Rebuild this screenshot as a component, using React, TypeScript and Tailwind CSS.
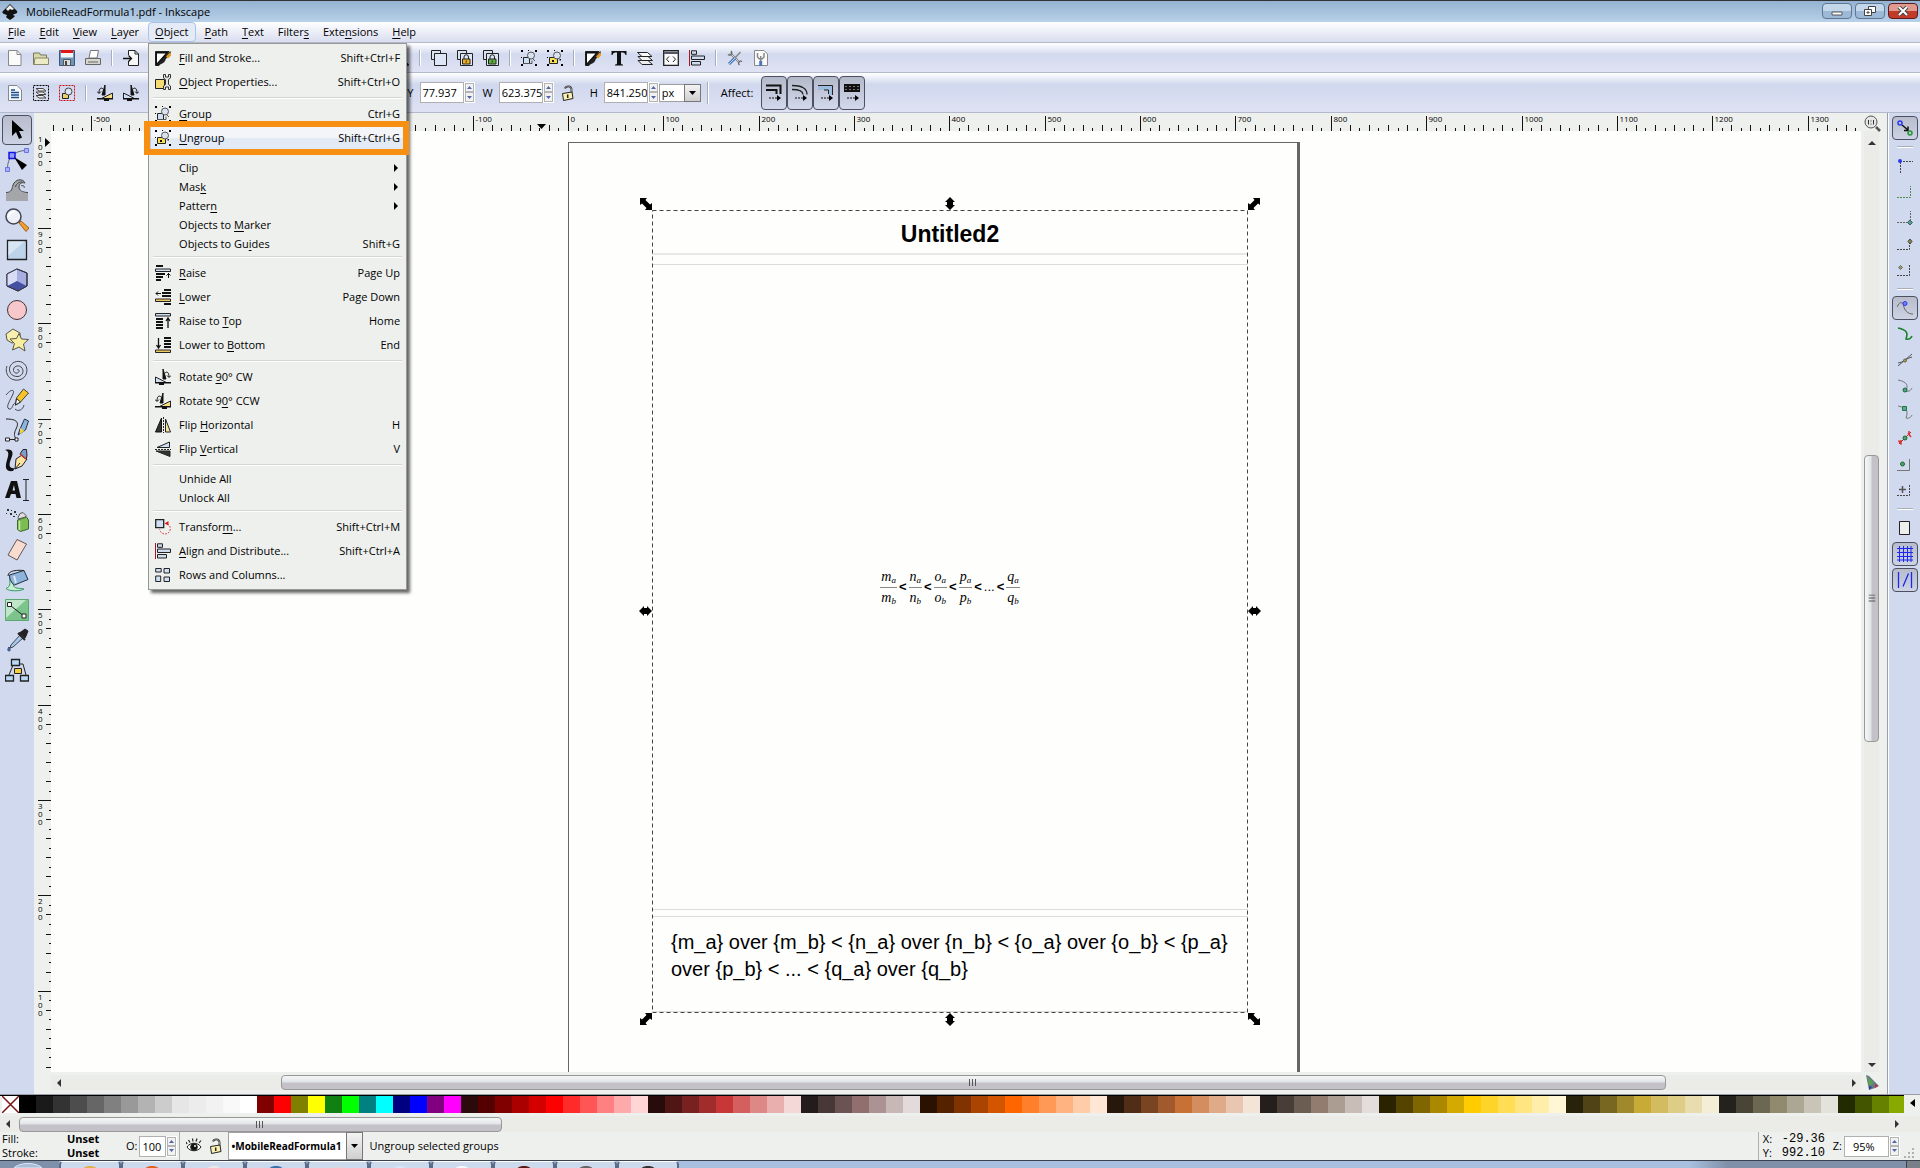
import type { ReactNode } from "react";
import clsx from "clsx";

interface IconProps {
  children: ReactNode;
  size?: number;
}

/* ---------- Icon helpers ---------- */

const Small = ({ children, size = 16 }: IconProps) => (
  <svg width={size} height={size} viewBox="0 0 16 16" fill="none" stroke="#222" aria-hidden="true">
    {children}
  </svg>
);

const Large = ({ children, size = 24 }: IconProps) => (
  <svg width={size} height={size} viewBox="0 0 24 24" fill="none" stroke="#222" aria-hidden="true">
    {children}
  </svg>
);

const dots = (
  <path d="M0 0h2v2H0zM14 0h2v2h-2zM0 14h2v2H0zM14 14h2v2h-2zM7 0h1v1H7zM0 7h1v1H0z" fill="#000" stroke="none" />
);

const lockBody = (fill: string) => (
  <>
    <path d="M7 9V7a2.200 2.200 0 0 1 4.500 0v2" stroke="#222" />
    <path d="M5.500 9h7.500v5H5.500z" fill={fill} />
    <path d="M9.200 10.500v2" />
  </>
);

const pages = (
  <>
    <path d="M.5.5h9v9h-9z" fill="#dbe3ef" />
    <path d="M3.500 3.500h12v12h-12z" fill="#dce6f4" />
  </>
);

const icons = {
  fill: (
    <Small>
      <path d="M.5 1.500H14L4 15.500H.5z" fill="#111" />
      <path d="M2 3.500h8.500L2 13z" fill="#fff" stroke="none" />
      <path d="M15.500 1L9 7.500 2 15c5-.5 8.500-3 8.500-5.500L16 3z" fill="#222" stroke="none" />
      <path d="M15.500 2l-4.500 4.500 2 2 3-3z" fill="#e39a20" stroke="none" />
    </Small>
  ),
  properties: (
    <Small>
      <path d="M.5 5.500h9v9h-9z" fill="#f5dc70" />
      <path d="M8.500.5v3.500l2 1.500v5l-2 1.500v3.500h2v-2.500h3v2.500h2V12l-2-1.500v-5l2-1.500V.5h-2V3h-3V.5z" fill="#e4e4e4" stroke="#333" />
    </Small>
  ),
  group: (
    <Small>
      {dots}
      <path d="M2.500 7.500h6v6h-6z" fill="#cfe0f5" />
      <circle cx="10" cy="5.500" r="3.500" fill="#d8e3f2" stroke="#555" />
      <path d="M12 9l2 2M3 13.500h8v-3" stroke="#555" />
    </Small>
  ),
  ungroup: (
    <Small>
      {dots}
      <path d="M2.500 7.500h8v6h-8z" fill="#f9e050" />
      <circle cx="10" cy="5.500" r="3.500" fill="#d8e3f2" stroke="#555" />
      <path d="M5 10h2v2H5zM12.500 9h1.500v1.500h-1.500z" fill="#111" stroke="none" />
    </Small>
  ),
  raise: (
    <Small>
      <path d="M1 1h7M1 9h9M1 12h7M1 15h5" strokeWidth="2" stroke="#111" />
      <path d="M.5 4h15v2.500H.5z" fill="#cfe0f5" />
      <path d="M13.500 8v5M11.500 10.500l2-2 2 2" stroke="#111" />
    </Small>
  ),
  lower: (
    <Small>
      <path d="M9 1h7M7 4h9M7 7h9M9 15h7" strokeWidth="2" stroke="#111" />
      <path d="M.5 10h15v2.500H.5z" fill="#f0c860" />
      <path d="M1 4.500h5M3 2.500l-2 2 2 2" stroke="#111" />
    </Small>
  ),
  raiseTop: (
    <Small>
      <path d="M.5.5h15V3H.5z" fill="#cfe0f5" />
      <path d="M1 6h7M1 9h7M1 12h7M1 15h7" strokeWidth="2" stroke="#111" />
      <path d="M13 15V5M11 8l2-3 2 3" stroke="#111" strokeWidth="1.300" />
    </Small>
  ),
  lowerBottom: (
    <Small>
      <path d="M.5 13h15v2.500H.5z" fill="#f0c860" />
      <path d="M9 1h7M9 4h7M9 7h7M9 10h7" strokeWidth="2" stroke="#111" />
      <path d="M3.500 1v10M1.500 8l2 3 2-3" stroke="#111" strokeWidth="1.300" />
    </Small>
  ),
  rotateCw: (
    <Small>
      <path d="M8 0v10h3z" fill="#111" stroke="#111" />
      <path d="M.5 13.500V8l11 5.500z" fill="#cfe0f5" />
      <path d="M0 13h16v1.500H0zM4 14h5v2H4z" fill="#111" stroke="none" />
      <path d="M10 4c2-2 4-.5 4 4M12 6.500l2 2 2-2" stroke="#111" />
    </Small>
  ),
  rotateCcw: (
    <Small>
      <path d="M8 0v10H5z" fill="#111" stroke="#111" />
      <path d="M15.500 13.500V8l-11 5.500z" fill="#f7dc80" />
      <path d="M0 13h16v1.500H0zM7 14h5v2H7z" fill="#111" stroke="none" />
      <path d="M6 4C4 2 2 3.500 2 8M0 6.500l2 2 2-2" stroke="#111" />
    </Small>
  ),
  flipH: (
    <Small>
      <path d="M6.500 1v14h-6z" fill="#333" stroke="#111" />
      <path d="M10.500 2v13h5z" fill="#f7e6a0" />
      <path d="M8.500 0v16" strokeDasharray="2 1" />
    </Small>
  ),
  flipV: (
    <Small>
      <path d="M14.500 1v5.500H2z" fill="#cfe0f5" />
      <path d="M15 10v5.500L1 10z" fill="#333" />
      <path d="M0 8.500h16" strokeDasharray="2 1" />
    </Small>
  ),
  transform: (
    <Small>
      <path d="M.7.7h8v8h-8z" fill="#cfe0f5" strokeWidth="1.300" />
      <path d="M12.500 5A5.300 5.300 0 1 1 4.700 10" stroke="#e01818" strokeDasharray="1.500 1.500" />
      <path d="M13.500 2l-4 2.500 4 2z" fill="#e01818" stroke="none" />
    </Small>
  ),
  align: (
    <Small>
      <path d="M.5 0v16" stroke="#b01020" />
      <path d="M2.500.8h5v3.500h-5zM2.500 6h13v3.500h-13zM2.500 11.500h9V15h-9z" fill="#cfdcee" />
    </Small>
  ),
  rows: (
    <Small>
      <path d="M.7 1.500h5.500v3.500H.7zM9 1.500h5.500v4.500H9zM.7 9h5v5.500h-5zM9 10h5.500v4.500H9z" fill="#cfe0f5" />
    </Small>
  ),
  file: (
    <Small>
      <path d="M1.500.5h8.500l4 4v11H1.500z" fill="#fafafa" stroke="#888" />
      <path d="M10 .5v4h4" stroke="#888" />
    </Small>
  ),
  open: (
    <Small>
      <path d="M.5 14.500V3h6l1 2h6v9.500z" fill="#d8d8a8" stroke="#77775c" />
      <path d="M2 8h13.500v6.500H1z" fill="#ecebc6" stroke="#8a8a6a" />
    </Small>
  ),
  save: (
    <Small>
      <path d="M.5.5h15v15H.5z" fill="#6f95bd" stroke="#3c5878" />
      <path d="M2 0h12v3H2z" fill="#e01818" stroke="none" />
      <path d="M2 3h12v4.500H2z" fill="#f5f5f5" stroke="none" />
      <path d="M4.500 9.500h7v6h-7z" fill="#ddd" stroke="#555" />
      <path d="M6 11h2v4H6z" fill="#444" stroke="none" />
    </Small>
  ),
  print: (
    <Small>
      <path d="M4 8L5.500.5h8L12 8z" fill="#fff" stroke="#777" />
      <path d="M.5 8.500h15v6H.5z" fill="#d6d6d0" stroke="#666" />
      <path d="M3 12h10" stroke="#666" />
    </Small>
  ),
  importFile: (
    <Small>
      <path d="M5.500 5V.5H12l3.500 3.500v11.500h-10V11" fill="#f7f7f7" />
      <path d="M12 .5V4h3.500" />
      <path d="M0 8.500h8M5.500 5.500l3 3-3 3" stroke="#111" strokeWidth="1.300" />
    </Small>
  ),
  undo: (
    <Small>
      <path d="M3 6h6a4 4 0 0 1 0 8H6M6 2.500L2.500 6 6 9.500" strokeWidth="2" stroke="#b09030" />
    </Small>
  ),
  copy: (
    <Small>
      <path d="M2.500.5h7v11h-7zM6.500 4.500h7v11h-7z" fill="#fff" />
    </Small>
  ),
  zoomPage: (
    <Small>
      <circle cx="7" cy="7" r="5.500" fill="#e3ebf5" />
      <path d="M11 11l4.500 4.500" strokeWidth="2" />
    </Small>
  ),
  duplicate: <Small>{pages}</Small>,
  clone: (
    <Small>
      {pages}
      {lockBody("#f0b020")}
    </Small>
  ),
  unlink: (
    <Small>
      {pages}
      {lockBody("#60b040")}
    </Small>
  ),
  textT: (
    <Small>
      <path d="M.5 1h15v4h-1c-.5-2-1.500-2.500-4.500-2.500v10.500c0 1 .5 1.500 2 1.500V15.500H4V14.500c1.500 0 2-.5 2-1.500V2.500C3 2.500 2 3 1.500 5h-1z" fill="#111" stroke="none" />
    </Small>
  ),
  layers: (
    <Small>
      <path d="M1 10.500h10l4.500 4H5z" fill="#eee" />
      <path d="M1 6.500h10l4.500 4H5z" fill="#f3f3f3" />
      <path d="M.5 2.500h10l4.500 4H5z" fill="#fafafa" />
    </Small>
  ),
  xml: (
    <Small>
      <path d="M.7.7h14.600v14.600H.7z" fill="#fafafa" strokeWidth="1.300" />
      <path d="M1 1.500h14V4H1z" fill="#556" stroke="none" />
      <path d="M6 6.500L3.500 9.200 6 12M10 6.500l2.500 2.700L10 12" />
    </Small>
  ),
  prefs: (
    <Small>
      <path d="M3 3l9 9" stroke="#777" strokeWidth="2" />
      <path d="M3 3l9 9" stroke="#ddd" />
      <path d="M13.500 2L8 8" stroke="#888" strokeWidth="1.500" />
      <path d="M8 8l-6 6" stroke="#4a78b8" strokeWidth="3" />
      <path d="M8 8l-6 6" stroke="#bcd4f0" />
      <path d="M15 11.500a2 2 0 1 0-2.500 3.500M1 4.500A2 2 0 1 0 4 1" stroke="#666" strokeWidth="1.300" />
    </Small>
  ),
  docPrefs: (
    <Small>
      <path d="M1.500.5H11l3.500 3.500v11.500h-13z" fill="#fafafa" stroke="#888" />
      <path d="M4.500 3v4l2 2h2.500l2-2V3" stroke="#888" strokeWidth="1.500" />
      <path d="M7.700 6v5" stroke="#888" strokeWidth="1.500" />
      <path d="M7.700 11v5" stroke="#4a78b8" strokeWidth="3" />
    </Small>
  ),
  docText: (
    <Small>
      <path d="M1.500.5H10L14.500 5v10.500h-13z" fill="#f7fbff" stroke="#888" />
      <path d="M4 5h4M4 7.500h8M4 10h8M4 12.500h8" stroke="#1c4f8c" strokeWidth="1.300" />
    </Small>
  ),
  selectLayers: (
    <Small>
      <path d="M.5.5h15v15H.5z" stroke="#000" strokeDasharray="2 1" />
      <path d="M3 10.500h7l3 2.500H6zM3 7h7l3 2.500H6zM3 3.500h7L13 6H6z" fill="#eee" stroke="#444" />
    </Small>
  ),
  selectRed: (
    <Small>
      <path d="M.5.5h15v15H.5z" stroke="#d01010" strokeDasharray="2 1" />
      <path d="M3.500 8.500h6v5h-6z" fill="#f0d060" />
      <circle cx="9.500" cy="6.500" r="3.500" fill="#dde6f2" stroke="#444" />
    </Small>
  ),
  unlock: (
    <Small>
      <path d="M5 3.500C6 .5 11 .5 11.500 4v3.500" stroke="#222" strokeWidth="1.800" />
      <path d="M5 3.500C6 .5 11 .5 11.500 4v3.500" stroke="#eee" strokeWidth="0.500" />
      <path d="M2.500 8.500l9.500-1.500 1 6.500-9.500 2z" fill="#faf0b0" />
      <path d="M7.700 9.500v3.500" strokeWidth="1.500" />
    </Small>
  ),
  eye: (
    <Small>
      <path d="M1 9c3-5 11-5 14 0-3 5-11 5-14 0z" fill="#fff" />
      <circle cx="8" cy="9" r="3.300" fill="#111" />
      <path d="M1 6L0 4M4 4.500L2.500 2M7 3.500L6.500.5M10 3.500l1-3M13 5l2-2.500" strokeWidth="1.200" />
      <circle cx="9" cy="8" r="1" fill="#fff" stroke="none" />
    </Small>
  ),
};

/* ---------- Toolbox ---------- */

const tools: { label: string; icon: ReactNode }[] = [
  { label: "Selector", icon: <Large><path d="M7 2v16l4-4 3 7 3-1.500-3-6.500h5z" fill="#000" stroke="none" /></Large> },
  { label: "Node editor", icon: (
    <Large>
      <path d="M2.500 20C2.500 10 9 3 20 2.500" stroke="#667" />
      <path d="M4 4.500h6v6H4z" fill="#8f9cff" stroke="#1414e0" strokeWidth="1.500" />
      <path d="M.5 19.500h4v4h-4zM19.500.5h4v4h-4z" fill="#a8b0ff" stroke="#6a72e8" />
      <path d="M9 9l13 8-5 5z" fill="#000" stroke="none" />
    </Large>
  ) },
  { label: "Tweak", icon: (
    <Large>
      <path d="M1 23v-8c6 0 6-4 7-8 2-6 10-7 12-2-4-1-6 1-6 4 0 4 3 6 9 6v8z" fill="#a4a6aa" stroke="none" />
      <path d="M1 14.500c6 0 6-4 7-7.500 2-6 10-7 12-2-4-1-6 1-6 4s3 5.500 9 5.500M10.500 9c1-4 4-5 7-5M16 8c2-1 4 0 3 2" stroke="#444" />
    </Large>
  ) },
  { label: "Zoom", icon: (
    <Large>
      <path d="M14 15l2-2 8 7-3 3.500z" fill="#f0a030" stroke="#a06010" />
      <circle cx="8.500" cy="8.500" r="7.500" fill="#eef1f8" stroke="#445" strokeWidth="1.500" />
      <path d="M4 9c0-3 2-5 5-5" stroke="#fff" strokeWidth="2" />
    </Large>
  ) },
  { label: "Rectangle", icon: (
    <Large>
      <path d="M2.500 2.500h19v19h-19z" fill="#bcd3ea" strokeWidth="1.300" />
      <path d="M3.500 3.500h16l-16 14z" fill="#d8e6f4" stroke="none" />
    </Large>
  ) },
  { label: "3D box", icon: (
    <Large>
      <path d="M2 6l10-5 10 4v13l-9 5-11-5z" fill="#a9aee0" />
      <path d="M2 6l10-5v12L2 18z" fill="#d8dcf5" stroke="none" />
      <path d="M12 13l9.500 5-8.500 4.500L2.500 18z" fill="#4450a0" stroke="none" />
      <path d="M2 6l10-5 10 4v13l-9 5-11-5z" stroke="#334" />
    </Large>
  ) },
  { label: "Ellipse", icon: <Large><circle cx="12" cy="12" r="9.500" fill="#f6c8cc" stroke="#433" /></Large> },
  { label: "Star", icon: (
    <Large>
      <path d="M1 6l7-5 7 4v8l-8 2-5-3z" fill="#f7eeb0" stroke="#554" />
      <path d="M14 5.500l2.500 5.500 7 .5-5 4.500 1.500 7-6-4-6.500 3 2-6.500-4.500-4.500 6.500-.5z" fill="#f9eea0" stroke="#554" />
    </Large>
  ) },
  { label: "Spiral", icon: <Large><path d="M12 12c1-1 2.500 0 2 1.500-1 2.500-5 2-5.500-1C8 8.500 13 6.500 16 9c4 3.500 1.500 9-3 9.500C6.500 19 3 13.500 5 8.500 7.500 3 15 1.500 19.500 6c3 3 3 8 1 11.500C17.500 23 8 24 3.500 18.500 1 15 .8 11 2 8" stroke="#444" /></Large> },
  { label: "Pencil", icon: (
    <Large>
      <path d="M1 7c5-6 9-6 7-1C6 11 0 19 4 21c4 1 3-6 7-6M10 21c3 3 8 1 9-4" stroke="#445" />
      <path d="M10.500 17l1-7 7-9 5 4-8 9z" fill="#f9c428" stroke="#443" />
      <path d="M10.500 17l1-6.500 4 3.500z" fill="#fff" />
    </Large>
  ) },
  { label: "Bezier pen", icon: (
    <Large>
      <path d="M1 1c12 0 13 4 10 10-2 4-2 7 0 10M3 21.500h8" stroke="#222" />
      <path d="M.5 20h4v3h-4zM10 20h3v3h-3z" fill="#fff" />
      <path d="M13 17l2-6 4.500-10L23.500 3l-3 9z" fill="#8fb4dc" stroke="#234" />
      <path d="M15 10l4.500 3-4.500 3z" fill="#f5d040" stroke="none" />
    </Large>
  ) },
  { label: "Calligraphy", icon: (
    <Large>
      <path d="M0 2c8-2 9 3 6 9-3 7-1 10 4 9l-2 3C0 24 0 19 2 12 4 6 4 3 0 2z" fill="#111" stroke="none" />
      <path d="M10 21l1-10 6-4 5 4-5 7z" fill="#fbe3a0" />
      <path d="M10 21l5-6" />
      <path d="M15 6l3-4.500h3.500L22 8l-1 3z" fill="#7f9cc8" />
      <path d="M15 6l6 5" stroke="#c03030" strokeWidth="1.500" />
    </Large>
  ) },
  { label: "Text", icon: (
    <Large>
      <path d="M0 20L6 3h6l4 17h-4.500l-1-4H6l-1.500 4zM7.500 12.500h2.500L9 7z" fill="#111" stroke="none" fillRule="evenodd" />
      <path d="M18 1.500h6M18 22.500h6M21 2v20" />
    </Large>
  ) },
  { label: "Spray", icon: (
    <Large>
      <path d="M12.500 12l9-3 2 3v9l-8 2.500-3-2z" fill="#7cbc50" stroke="#3d6a2c" />
      <path d="M14.500 13v9" stroke="#c8e8a8" strokeWidth="1.500" />
      <path d="M13 9.500l2-4 3-1 3 3-.5 1.500-7 2z" fill="#ddd" stroke="#555" />
      <path d="M2 1h2v2H2zM6 2h1v1H6zM9 3h2v2H9zM1 5h1v1H1zM5 5h2v2H5zM8 8h2v1H8zM11 6h1v1h-1z" fill="#333" stroke="none" />
    </Large>
  ) },
  { label: "Eraser", icon: <Large><path d="M12 1.500l9.500 4.500-9.500 16-9-5z" fill="#f7dccf" stroke="#655" /></Large> },
  { label: "Paint bucket", icon: (
    <Large>
      <path d="M1 20.500c3 3 14 3 18 .5-5-1-10 0-10.500-4L5 9c-1 5 2 9-4 11.500z" fill="#c8f0d0" stroke="#396" />
      <path d="M4.500 7L19 2.500l4 9L9.500 17C6 15 4.500 11 4.500 7z" fill="#8fb4dc" stroke="#234" />
      <path d="M9 8l2 7" stroke="#dce8f6" strokeWidth="2" />
      <path d="M3 8c0-6 10-6 16-5.500" />
    </Large>
  ) },
  { label: "Gradient", icon: (
    <Large>
      <path d="M.5 1.500h23v21H.5z" fill="#7cc48c" stroke="#5aa870" />
      <path d="M1 2h20L1 20z" fill="#bfe6c8" stroke="none" />
      <path d="M4 6.500L19 18" />
      <path d="M2.500 4.500h4v4h-4zM17 16h4v4h-4z" fill="#fff" />
    </Large>
  ) },
  { label: "Dropper", icon: (
    <Large>
      <path d="M14 5l2-1 4-3 3 2-2 5-1 2z" fill="#222" />
      <path d="M15 7l-9 10-1 3 3-1 10-9z" fill="#a8c8e8" stroke="#445" />
      <path d="M13 5l7 7" strokeWidth="2" />
      <path d="M4 19c-2 3-1 4 0 4s2-1 0-4z" fill="#4a80b8" stroke="#347" />
    </Large>
  ) },
  { label: "Connector", icon: (
    <Large>
      <path d="M8 7L4 17M14 6h4l3 11" />
      <path d="M6.500 1.500h8v6h-8zM.5 17.500h8V23h-8zM15.500 17.500h8V23h-8z" fill="#b8d8f5" strokeWidth="1.300" />
      <path d="M9.500 10.500h7v5h-7z" fill="#f7d040" />
    </Large>
  ) },
];

/* ---------- Snap bar ---------- */

const snaps: ({ label: string; icon: ReactNode; on?: boolean } | null)[] = [
  { label: "Enable snapping", on: true, icon: <Small><path d="M5 5l6 5M11 6.500v4H7" stroke="#111" strokeWidth="1.500" /><circle cx="3" cy="3" r="2" stroke="#2a38f0" strokeWidth="1.500" /><circle cx="13" cy="13" r="2" stroke="#2c9040" strokeWidth="1.500" fill="#a8d8a8" /></Small> },
  null,
  { label: "Snap bounding box", icon: <Small><path d="M3 3.500h13M3.500 4v11" stroke="#444" strokeDasharray="2 1" /><circle cx="3" cy="3" r="2" fill="#2a38f0" stroke="none" /></Small> },
  { label: "Snap box edges", icon: <Small><path d="M0 13.500h13.500V2" stroke="#4c8c50" strokeDasharray="2 1" /></Small> },
  { label: "Snap box corners", icon: <Small><path d="M0 12.500h13.500V1" stroke="#666" strokeDasharray="2 1" /><path d="M13 10l2.500 2.500L13 15l-2.500-2.500z" fill="#5a9a90" stroke="#366" /></Small> },
  { label: "Snap edge midpoints", icon: <Small><path d="M0 13.500h12.500V3" stroke="#444" strokeDasharray="2 1" /><path d="M13 3l2 2.500L13 8l-2-2.500z" fill="#8a8a40" stroke="#444" /></Small> },
  { label: "Snap box centers", icon: <Small><path d="M0 13.500h12.500V3" stroke="#444" strokeDasharray="2 1" /><path d="M3.500 3.500l2 2-2 2-2-2z" fill="#a0a060" stroke="#666" /></Small> },
  null,
  { label: "Snap nodes", on: true, icon: <Small><path d="M0 7c3-6 4-4 6-4 1 8 5 11 10 11" stroke="#666" /><circle cx="8" cy="3.500" r="2" fill="#7080ff" stroke="#2a38f0" /></Small> },
  { label: "Snap paths", icon: <Small><path d="M1 2c10 2 10 6 8 11 3 1 5-1 6-3" stroke="#188028" strokeWidth="1.500" /></Small> },
  { label: "Snap intersections", icon: <Small><path d="M1 14L15 2M1 11c5 0 8-5 14-6" stroke="#555" /><circle cx="8" cy="8.500" r="1.500" fill="#a0a050" stroke="#664" /></Small> },
  { label: "Snap cusp nodes", icon: <Small><path d="M1 2c10 2 10 6 8 11 3 1 5-1 6-3" stroke="#777" /><circle cx="8" cy="12" r="2" fill="#50a0a0" stroke="#186828" /></Small> },
  { label: "Snap smooth nodes", icon: <Small><path d="M1 2c10 2 10 6 8 12 3 1 5-1 6-3" stroke="#777" /><path d="M5.500 2.500h4v4h-4z" fill="#60a0b0" stroke="#188028" /></Small> },
  { label: "Snap midpoints", icon: <Small><path d="M2 14L14 2" stroke="#c02020" /><path d="M1.500 10.500l3 4M4 10v3M11 3l3 4M12 1v4" stroke="#d83030" strokeWidth="1.500" /><circle cx="8" cy="8" r="2" fill="#50a070" stroke="#186828" /></Small> },
  { label: "Snap object centers", icon: <Small><path d="M0 14.500h12.500V3" stroke="#777" /><circle cx="5.500" cy="8" r="2" fill="#50a070" stroke="#186828" /></Small> },
  { label: "Snap rotation centers", icon: <Small><path d="M0 13.500h12.500V3" stroke="#444" strokeDasharray="2 1" /><path d="M5.500 4v7M2 7.500h7" stroke="#555" strokeWidth="1.500" /></Small> },
  null,
  { label: "Snap page border", icon: <Small><path d="M2.500 1.500h10v13h-10z" fill="#eee" /></Small> },
  { label: "Snap grids", on: true, icon: <Small><path d="M2.500 0v16M6.500 0v16M10.500 0v16M14 0v16M0 2.500h16M0 6.500h16M0 10.500h16M0 14h16" stroke="#1a28f0" /></Small> },
  { label: "Snap guides", on: true, icon: <Small><path d="M1.500 0v16M14.500 0v16M6 14.500L11.500 1.500" stroke="#1a28f0" strokeWidth="1.300" /></Small> },
];

const menus = ["_File", "_Edit", "_View", "_Layer", "_Object", "_Path", "_Text", "Filter_s", "Exte_nsions", "_Help"];

interface MenuEntry {
  label: string;
  keys?: string;
  icon?: ReactNode;
  sub?: boolean;
  tight?: boolean;
  active?: boolean;
}

const objectMenu: (MenuEntry | null)[] = [
  { label: "_Fill and Stroke...", keys: "Shift+Ctrl+F", icon: icons.fill },
  { label: "_Object Properties...", keys: "Shift+Ctrl+O", icon: icons.properties },
  null,
  { label: "_Group", keys: "Ctrl+G", icon: icons.group },
  { label: "_Ungroup", keys: "Shift+Ctrl+G", icon: icons.ungroup, active: true },
  null,
  { label: "Clip", sub: true, tight: true },
  { label: "Mas_k", sub: true, tight: true },
  { label: "Patter_n", sub: true, tight: true },
  { label: "Objects to _Marker", tight: true },
  { label: "Objects to Gu_ides", keys: "Shift+G", tight: true },
  null,
  { label: "_Raise", keys: "Page Up", icon: icons.raise },
  { label: "_Lower", keys: "Page Down", icon: icons.lower },
  { label: "Raise to _Top", keys: "Home", icon: icons.raiseTop },
  { label: "Lower to _Bottom", keys: "End", icon: icons.lowerBottom },
  null,
  { label: "Rotate _90° CW", icon: icons.rotateCw },
  { label: "Rotate 9_0° CCW", icon: icons.rotateCcw },
  { label: "Flip _Horizontal", keys: "H", icon: icons.flipH },
  { label: "Flip _Vertical", keys: "V", icon: icons.flipV },
  null,
  { label: "Unhide All", tight: true },
  { label: "Unlock All", tight: true },
  null,
  { label: "Transfor_m...", keys: "Shift+Ctrl+M", icon: icons.transform },
  { label: "_Align and Distribute...", keys: "Shift+Ctrl+A", icon: icons.align },
  { label: "Rows and Columns...", icon: icons.rows },
];

const palette = (
  "000000 1a1a1a 333333 4d4d4d 666666 808080 999999 b3b3b3 cccccc e6e6e6 ececec f2f2f2 f9f9f9 ffffff " +
  "800000 ff0000 808000 ffff00 108010 00ff00 008080 00ffff 000080 0000ff 800080 ff00ff " +
  "2b0a0c 550000 800000 aa0000 d40000 ff0000 ff2a2a ff5555 ff8080 ffaaaa ffd5d5 " +
  "280b0b 501616 782121 a02c2c c83737 d35f5f de8787 e9afaf f4d7d7 " +
  "241c1c 483737 6c5353 916f6f ac9393 c8b7b7 e3dbdb " +
  "2b1100 552200 803300 aa4400 d45500 ff6600 ff7f2a ff9955 ffb380 ffccaa ffe6d5 " +
  "28170b 502d16 784421 a05a2c c87137 d38d5f deaa87 e9c6af f4e3d7 " +
  "241f1c 483e37 6c5d53 917c6f ac9d93 c8beb7 e3dedb " +
  "2b2200 554400 806600 aa8800 d4aa00 ffcc00 ffd42a ffdd55 ffe680 ffeeaa fff6d5 " +
  "28220b 504416 786721 a0892c c8ab37 d3bc5f decd87 e9ddaf f4eed7 " +
  "24221c 484537 6c6753 918a6f aca793 c8c4b7 e3e2db " +
  "222b00 445500 668000 88aa00"
).split(" ");

const Mnemonic = ({ text }: { text: string }) => {
  const at = text.indexOf("_");
  if (at < 0) return <span>{text}</span>;
  return (
    <span>
      {text.slice(0, at)}
      <span className="underline underline-offset-2">{text[at + 1]}</span>
      {text.slice(at + 2)}
    </span>
  );
};

const ObjectMenu = () => (
  <div
    role="menu"
    className="absolute left-0 top-full z-20 mt-px w-[259px] border border-[#979797] bg-[#eef0ee] py-0.5 shadow-[3px_3px_3px_rgba(0,0,0,0.6)]"
  >
    {objectMenu.map((item, i) =>
      item ? (
        <div key={i} className="relative px-0.5">
          <button
            role="menuitem"
            className={clsx(
              "flex w-full items-center pl-1 pr-1 text-left",
              item.tight ? "h-[19px]" : "h-6",
              item.active && "bg-linear-to-b from-[#f3f5f9] from-50% to-[#e2eaf6] to-50% outline outline-[#b8cbe8]",
            )}
          >
            <span className="mr-2 flex w-4">{item.icon}</span>
            <Mnemonic text={item.label} />
            <span className="ml-auto">{item.keys}</span>
            {item.sub && (
              <svg width="4" height="8" viewBox="0 0 4 8" className="mr-0.5" aria-hidden="true">
                <path d="M0 0l4 4-4 4z" />
              </svg>
            )}
          </button>
          {item.active && (
            <div className="pointer-events-none absolute -inset-[5px] right-[-3px] border-[6px] border-[#f79012]" />
          )}
        </div>
      ) : (
        <div key={i} className="mx-1 my-[3px] border-b border-t border-b-white border-t-[#d4d6d4]" />
      ),
    )}
  </div>
);

const bar = "border-b border-[#b4b9cc] bg-linear-to-b from-white";

const TitleBar = () => (
  <header className="flex h-[22px] items-center border-t border-[#333] bg-linear-to-b from-[#94b2d1] to-[#b9d1e9] pl-0.5 pr-0.5">
    <svg width="16" height="16" viewBox="0 0 16 16" aria-hidden="true">
      <path d="M8 0l7 7c1 2-1 3-3 3l-1 1 2 1-2 2-3 2-3-2-1-1 1-2-3-1C0 9 0 8 1 7z" fill="#111" />
      <path d="M8 1l4 4-2 1-2-1-2 2-2-2z" fill="#eee" />
    </svg>
    <h1 className="ml-2">MobileReadFormula1.pdf - Inkscape</h1>
    <div className="ml-auto flex gap-[3px] pb-px">
      <button aria-label="Minimize" className="flex h-4 w-[30px] items-center justify-center rounded-sm border border-[#5c7694] bg-linear-to-b from-[#c4d6ea] from-50% to-[#9db9d8] to-50%">
        <svg width="12" height="12" viewBox="0 0 12 12" aria-hidden="true"><path d="M1 7h10v3H1z" fill="#fff" stroke="#555" /></svg>
      </button>
      <button aria-label="Restore" className="flex h-4 w-[30px] items-center justify-center rounded-sm border border-[#5c7694] bg-linear-to-b from-[#c4d6ea] from-50% to-[#9db9d8] to-50%">
        <svg width="12" height="12" viewBox="0 0 12 12" fill="#fff" stroke="#444" aria-hidden="true"><path d="M4.500 1.500h7v6h-7z" /><path d="M.5 4.500h7v6h-7z" /><path d="M3 7h2v1H3z" /></svg>
      </button>
      <button aria-label="Close" className="flex h-4 w-[30px] items-center justify-center rounded-sm border border-[#5a1c1c] bg-linear-to-b from-[#e09a90] from-50% to-[#c23a28] to-50%">
        <svg width="12" height="10" viewBox="0 0 12 10" fill="none" aria-hidden="true">
          <path d="M2 1l8 8M10 1L2 9" stroke="#444" strokeWidth="4" />
          <path d="M2 1l8 8M10 1L2 9" stroke="#fff" strokeWidth="2" />
        </svg>
      </button>
    </div>
  </header>
);

const IconButton = ({ label, children }: { label: string; children: ReactNode }) => (
  <button aria-label={label} className="flex h-6 w-[26px] shrink-0 items-center justify-center">
    {children}
  </button>
);

const Divider = () => <div className="mx-[5px] h-4 w-0.5 shrink-0 border-l border-r border-l-[#a9adba] border-r-white" />;

const commands: ([string, ReactNode] | null)[] = [
  ["New", icons.file],
  ["Open", icons.open],
  ["Save", icons.save],
  ["Print", icons.print],
  null,
  ["Import", icons.importFile],
  ["Export", icons.importFile],
  null,
  ["Undo", icons.undo],
  ["Redo", icons.undo],
  null,
  ["Copy", icons.copy],
  ["Cut", icons.copy],
  ["Paste", icons.copy],
  null,
  ["Zoom selection", icons.zoomPage],
  ["Zoom drawing", icons.zoomPage],
  ["Zoom page", icons.zoomPage],
  null,
  ["Duplicate", icons.duplicate],
  ["Clone", icons.clone],
  ["Unlink clone", icons.unlink],
  null,
  ["Group", icons.group],
  ["Ungroup", icons.ungroup],
  null,
  ["Fill and stroke", icons.fill],
  ["Text and font", icons.textT],
  ["Layers", icons.layers],
  ["XML editor", icons.xml],
  ["Align and distribute", icons.align],
  null,
  ["Preferences", icons.prefs],
  ["Document properties", icons.docPrefs],
];

const Spinner = ({ name }: { name: string }) => (
  <div className="flex w-[11px] flex-col border border-white">
    <button aria-label={`Increase ${name}`} className="flex h-[9px] items-center justify-center border border-[#b4b4b4] bg-[#f2f2f2]">
      <svg width="5" height="3" viewBox="0 0 5 3" aria-hidden="true"><path d="M0 3L2.500 0 5 3z" fill="#5264a8" /></svg>
    </button>
    <button aria-label={`Decrease ${name}`} className="flex h-[10px] items-center justify-center border border-[#b4b4b4] bg-[#f2f2f2]">
      <svg width="5" height="3" viewBox="0 0 5 3" aria-hidden="true"><path d="M0 0l2.500 3L5 0z" fill="#5264a8" /></svg>
    </button>
  </div>
);

const Field = ({ id, label, value }: { id: string; label: string; value: string }) => (
  <div className="flex shrink-0 items-center">
    <label htmlFor={id} className="mr-1.5">{label}</label>
    <input id={id} defaultValue={value} className="h-[21px] w-11 border border-[#b0b0b0] bg-white pl-0.5" />
    <Spinner name={label} />
  </div>
);

const Caret = () => <svg width="7" height="4" viewBox="0 0 7 4" aria-hidden="true"><path d="M0 0h7L3.500 4z" /></svg>;

const affects: [string, ReactNode][] = [
  ["Scale stroke width", <path key="a" d="M0 1.500h14.500V10M0 6h10.500v4" fill="none" stroke="#111" strokeWidth="2" />],
  ["Scale rounded corners", <path key="b" d="M0 1.500c10 0 15 3 15 9M0 5.500c7 0 11 2 11 5" fill="none" stroke="#222" strokeWidth="1.300" />],
  ["Move gradients", <g key="c"><path d="M0 1h15v10h-4V6H0z" fill="#9cbce0" /><path d="M0 1.500h14.500V11M6 6h4.500v4" fill="none" stroke="#222" /></g>],
  ["Move patterns", <g key="d"><path d="M0 0h16v8H0z" fill="#111" /><path d="M2 2v5M6 2v5M10 2v5M14 2v5" stroke="#ddd" strokeDasharray="1 2" /></g>],
];

const ToolControls = () => (
  <div className={clsx(bar, "flex h-10 shrink-0 items-center via-[#d0d8ee] via-30% to-[#dfe2f3] pl-0.5")}>
    <IconButton label="Select all">{icons.docText}</IconButton>
    <IconButton label="Select all in all layers">{icons.selectLayers}</IconButton>
    <IconButton label="Deselect">{icons.selectRed}</IconButton>
    <Divider />
    <IconButton label="Rotate 90° CCW">{icons.rotateCcw}</IconButton>
    <IconButton label="Rotate 90° CW">{icons.rotateCw}</IconButton>
    <IconButton label="Flip horizontal">{icons.flipH}</IconButton>
    <IconButton label="Flip vertical">{icons.flipV}</IconButton>
    <Divider />
    <IconButton label="Lower to bottom">{icons.lowerBottom}</IconButton>
    <IconButton label="Lower">{icons.lower}</IconButton>
    <IconButton label="Raise">{icons.raise}</IconButton>
    <IconButton label="Raise to top">{icons.raiseTop}</IconButton>
    <div className="ml-5 flex items-center gap-2">
      <Field id="pos-x" label="X" value="87.250" />
      <Field id="pos-y" label="Y" value="77.937" />
      <Field id="size-w" label="W" value="623.375" />
    </div>
    <button aria-label="Lock width and height" className="mx-1 flex w-5 justify-center">{icons.unlock}</button>
    <div className="ml-2 flex">
      <Field id="size-h" label="H" value="841.250" />
    </div>
    <div className="relative flex">
      <select aria-label="Units" className="h-[18px] w-[42px] appearance-none border border-[#a0a0a0] bg-white pl-0.5">
        <option>px</option>
      </select>
      <span className="pointer-events-none absolute right-0 top-0 flex h-[18px] w-[17px] items-center justify-center border border-[#777] bg-linear-to-b from-[#f4f4f4] to-[#cfcfcf]">
        <Caret />
      </span>
    </div>
    <div className="mx-1.5 h-[22px] border-l border-r border-l-[#a9adba] border-r-white" />
    <span className="ml-1.5 mr-2">Affect:</span>
    {affects.map(([label, icon]) => (
      <button
        key={label}
        aria-label={label}
        aria-pressed="true"
        className="flex h-[34px] w-[26px] flex-col items-center justify-center rounded border border-[#4c5060] bg-linear-to-b from-[#b4b9ca] to-[#d3d9ec]"
      >
        <svg width="16" height="11" viewBox="0 0 16 11" aria-hidden="true">{icon}</svg>
        <svg width="16" height="6" viewBox="0 0 16 6" aria-hidden="true">
          <path d="M3 3h2M6 3h2M9 3h3" stroke="#111" />
          <path d="M11 0l4 3-4 3z" />
        </svg>
      </button>
    ))}
  </div>
);

/* ---------- Rulers ---------- */

const UNIT = 95.35;
const ORIGIN_X = 517.5;
const ORIGIN_Y = 955.6;

const HorizontalRuler = () => {
  const ticks = [];
  for (let n = -54; n <= 135; n++) {
    const x = Math.floor(ORIGIN_X + (n * UNIT) / 10) + 0.5;
    const top = n % 10 === 0 ? 3 : n % 2 === 0 ? 12 : 15;
    ticks.push(<path key={n} d={`M${x} ${top}V18`} stroke="#111" />);
    if (n % 10 === 0) {
      ticks.push(<text key={`t${n}`} x={x + 2} y={9} fontSize="8">{n * 10}</text>);
    }
  }
  return (
    <svg className="h-[18px] min-w-0 flex-1" aria-hidden="true">
      {ticks}
      <path d="M486 11h9l-4.500 5z" />
    </svg>
  );
};

const VerticalRuler = () => {
  const ticks = [];
  for (let n = 2; n <= 98; n++) {
    const y = Math.floor(ORIGIN_Y - (n * UNIT) / 10) + 0.5;
    const left = n % 10 === 0 ? 4 : n % 2 === 0 ? 12 : 15;
    ticks.push(<path key={n} d={`M${left} ${y}H17`} stroke="#111" />);
  }
  for (let n = 1; n <= 10; n++) {
    const y = Math.floor(ORIGIN_Y - n * UNIT);
    String(n * 100).split("").forEach((digit, k) =>
      ticks.push(<text key={`${n}-${k}`} x={4} y={y + 9 + k * 8} fontSize="8">{digit}</text>),
    );
  }
  return (
    <svg className="h-full w-[17px] shrink-0" aria-hidden="true">
      {ticks}
      <path d="M11 7v9l5-4.500z" />
    </svg>
  );
};

/* ---------- Canvas ---------- */

const ArrowV = ({ className }: { className?: string }) => (
  <svg width="10" height="13" viewBox="0 0 10 13" className={clsx("absolute", className)} aria-hidden="true">
    <path d="M5 0l5 5H8v3h2l-5 5-5-5h2V5H0z" />
  </svg>
);

const ArrowH = ({ className }: { className?: string }) => (
  <svg width="13" height="10" viewBox="0 0 13 10" className={clsx("absolute", className)} aria-hidden="true">
    <path d="M0 5l5-5v2h3V0l5 5-5 5V8H5v2z" />
  </svg>
);

const ArrowD = ({ className }: { className?: string }) => (
  <svg width="12" height="12" viewBox="0 0 12 12" className={clsx("absolute", className)} aria-hidden="true">
    <path d="M0 0h7L5.500 2l4.500 4.500L12 5v7H5l1.500-2L2 5.500 0 7z" />
  </svg>
);

const Fraction = ({ letter }: { letter: string }) => (
  <span className="flex flex-col text-center font-['Liberation_Serif',serif] text-sm leading-5 italic">
    <span className="border-b border-[#888] px-px">
      {letter}
      <sub className="text-[9px]">a</sub>
    </span>
    <span className="px-px">
      {letter}
      <sub className="text-[9px]">b</sub>
    </span>
  </span>
);

const Canvas = () => (
  <main className="relative min-w-0 flex-1 overflow-hidden bg-[#fefefd] font-['Liberation_Sans',Arial,sans-serif]">
    <div className="absolute -bottom-1 left-[517px] top-[11px] w-[732px] border border-r-[3px] border-[#666]" />
    <div className="absolute left-[601px] top-[79px] h-[803px] w-[596px]">
      <div className="flex h-full flex-col pb-px">
        <div className="flex h-[45px] items-center justify-center border-b-2 border-[#e8e8e8] pt-1 text-[23px] font-bold">
          <h2>Untitled2</h2>
        </div>
        <div className="mt-[9px] flex h-[646px] items-center justify-center gap-0.5 border-y border-[#dcdcdc] text-[13px] leading-5">
          <Fraction letter="m" />
          <b>&lt;</b>
          <Fraction letter="n" />
          <b>&lt;</b>
          <Fraction letter="o" />
          <b>&lt;</b>
          <Fraction letter="p" />
          <b>&lt;</b>...<b>&lt;</b>
          <Fraction letter="q" />
        </div>
        <p className="mt-1.5 flex-1 border-y border-[#dcdcdc] pl-[19px] pr-4 pt-3 text-xl leading-[27px]">
          {"{m_a} over {m_b} < {n_a} over {n_b} < {o_a} over {o_b} < {p_a} over {p_b} < ... < {q_a} over {q_b}"}
        </p>
      </div>
      <svg className="absolute inset-0 h-full w-full" fill="none" aria-hidden="true">
        <rect x="0.500" y="0.500" width="595" height="802" stroke="#444" strokeDasharray="4 3" />
      </svg>
      <ArrowD className="-left-3 -top-3" />
      <ArrowD className="-right-3 -top-3 -scale-x-100" />
      <ArrowD className="-bottom-3 -left-3 -scale-x-100" />
      <ArrowD className="-bottom-3 -right-3" />
      <ArrowV className="-top-[13px] left-[293px]" />
      <ArrowV className="-bottom-[13px] left-[293px]" />
      <ArrowH className="-left-[13px] top-[396px]" />
      <ArrowH className="-right-[13px] top-[396px]" />
    </div>
  </main>
);

const ScrollArrow = ({ label, rotate }: { label: string; rotate: string }) => (
  <button aria-label={label} className="flex h-[15px] w-[15px] shrink-0 items-center justify-center">
    <svg width="4" height="8" viewBox="0 0 4 8" className={rotate} fill="#333" aria-hidden="true">
      <path d="M4 0L0 4l4 4z" />
    </svg>
  </button>
);

const hThumb =
  "flex h-[15px] items-center justify-center rounded-sm border border-[#989898] bg-linear-to-b from-[#f2f4f4] from-10% via-[#e0e5e8] via-45% to-[#c4c2c8] to-55%";

const Grip = ({ className }: { className?: string }) => (
  <svg width="8" height="7" viewBox="0 0 8 7" className={className} aria-hidden="true">
    <path d="M.5 0v7M3.500 0v7M6.500 0v7" stroke="#555" />
  </svg>
);

const Workspace = () => (
  <div className="flex min-h-0 flex-1">
    <nav aria-label="Tools" className="flex w-[34px] shrink-0 flex-col items-center bg-[#d1d9ef] pt-0.5">
      {tools.map(({ label, icon }, i) => (
        <button
          key={label}
          aria-label={label}
          className={clsx(
            "flex h-[30px] w-[30px] shrink-0 items-center justify-center",
            i === 0 && "rounded border border-[#4c5060] bg-linear-to-b from-[#b8bccb] to-[#cdd3e4]",
          )}
        >
          {icon}
        </button>
      ))}
    </nav>
    <div className="flex min-w-0 flex-1 flex-col border-r border-[#9a9ea8]">
      <div className="flex h-[18px] shrink-0 pl-[17px] pr-[26px]">
        <HorizontalRuler />
      </div>
      <div className="flex min-h-0 flex-1">
        <VerticalRuler />
        <Canvas />
        <div className="relative ml-[3px] mr-2 flex w-[15px] shrink-0 flex-col items-center bg-[#ebece8] pt-1">
          <button aria-label="Zoom 1:1" className="absolute -top-4 left-0">
            <svg width="17" height="17" viewBox="0 0 17 17" fill="none" stroke="#555" aria-hidden="true">
              <circle cx="7" cy="7" r="6" fill="#e6e6e6" />
              <path d="M12 12l4 4" strokeWidth="2.500" />
              <path d="M4.500 5v4.500M9.500 5v4.500M7 5.500v1M7 8.500v1" stroke="#333" />
            </svg>
          </button>
          <ScrollArrow label="Scroll up" rotate="rotate-90" />
          <div className="flex-305" />
          <div className="flex w-full flex-284 items-center justify-center rounded-sm border border-[#989898] bg-linear-to-r from-[#f2f4f4] from-10% via-[#e0e5e8] via-45% to-[#c4c2c8] to-55%">
            <Grip className="rotate-90" />
          </div>
          <div className="flex-315" />
          <ScrollArrow label="Scroll down" rotate="-rotate-90" />
        </div>
      </div>
      <div className="flex h-[22px] shrink-0 items-end pb-1 pl-[17px]">
        <div className="flex min-w-0 flex-1 items-center bg-[#ebece8]">
          <ScrollArrow label="Scroll left" rotate="" />
          <div className="flex-215" />
          <div className={clsx(hThumb, "flex-1384")}>
            <Grip />
          </div>
          <div className="flex-180" />
          <ScrollArrow label="Scroll right" rotate="rotate-180" />
        </div>
        <button aria-label="Color management" className="ml-[5px] mr-2 flex w-[13px]">
          <svg width="13" height="15" viewBox="0 0 13 15" aria-hidden="true">
            <path d="M0 0l3 1 10 10-4 2-6 2z" fill="#678" />
            <path d="M1 1l7 7-5 3z" fill="#5ca050" />
            <path d="M9 9l3 2-3 2z" fill="#c03030" />
            <path d="M3 11l3 1-3 3z" fill="#3038b0" />
          </svg>
        </button>
      </div>
    </div>
    <nav aria-label="Snapping" className="flex w-8 shrink-0 flex-col items-center border-l border-white bg-[#d1d9ef] pt-0.5">
      {snaps.map((snap, i) =>
        snap ? (
          <button
            key={i}
            aria-label={snap.label}
            className={clsx(
              "my-px flex h-6 w-[26px] shrink-0 items-center justify-center rounded",
              snap.on && "border border-[#4c5060] bg-linear-to-b from-[#b8bccb] to-[#cdd3e4]",
            )}
          >
            {snap.icon}
          </button>
        ) : (
          <div key={i} className="my-[5px] h-0.5 w-4 shrink-0 border-b border-t border-b-white border-t-[#a9adba]" />
        ),
      )}
    </nav>
  </div>
);

const PaletteBar = () => (
  <div className="flex h-[22px] shrink-0 items-start border-t border-[#9a9ea8]">
    <div className="flex min-w-0 flex-1 overflow-hidden border-t border-black pl-0.5">
      <button aria-label="None" className="h-[17px] w-[17px] shrink-0 bg-white">
        <svg width="17" height="17" viewBox="0 0 17 17" aria-hidden="true">
          <path d="M0 0l17 17M17 0L0 17" stroke="#7a1414" strokeWidth="1.500" />
        </svg>
      </button>
      {palette.map((color, i) => (
        <button key={i} aria-label={`#${color}`} className="h-[17px] w-[17px] shrink-0" style={{ backgroundColor: `#${color}` }} />
      ))}
    </div>
    <button aria-label="Palette menu" className="flex h-3 w-4 items-center justify-center pt-1">
      <svg width="5" height="8" viewBox="0 0 5 8" aria-hidden="true"><path d="M5 0L0 4l5 4z" /></svg>
    </button>
  </div>
);

const StatusBar = () => (
  <footer className="flex h-7 shrink-0 items-center pl-0.5">
    <dl className="grid w-[124px] grid-cols-[65px_1fr] leading-[14px]">
      <dt>Fill:</dt>
      <dd className="font-bold">Unset</dd>
      <dt>Stroke:</dt>
      <dd className="font-bold">Unset</dd>
    </dl>
    <label htmlFor="opacity" className="mr-0.5">O:</label>
    <input id="opacity" defaultValue="100" className="h-[21px] w-[27px] border border-[#b0b0b0] bg-white pl-0.5" />
    <Spinner name="opacity" />
    <div className="ml-0.5 mr-1 h-7 border-l border-[#b0b0b0]" />
    <button aria-label="Toggle layer visibility" className="flex w-5 justify-center">{icons.eye}</button>
    <button aria-label="Toggle layer lock" className="ml-1 mr-1 flex w-4 justify-center">{icons.unlock}</button>
    <div className="relative">
      <select aria-label="Current layer" className="h-7 w-[135px] appearance-none border border-[#a0a0a0] bg-white pl-0.5 text-[10px] font-bold">
        <option>•MobileReadFormula1</option>
      </select>
      <span className="pointer-events-none absolute right-0 top-0 flex h-7 w-[17px] items-center justify-center border border-[#777] bg-linear-to-b from-[#f4f4f4] to-[#cfcfcf]">
        <Caret />
      </span>
    </div>
    <span className="ml-1.5">Ungroup selected groups</span>
    <dl className="ml-auto grid grid-cols-[19px_51px] border-l border-[#b0b0b0] pl-1 leading-[14px]">
      <dt>X:</dt>
      <dd className="font-['Liberation_Mono',monospace] text-xs leading-[14px]">-29.36</dd>
      <dt>Y:</dt>
      <dd className="font-['Liberation_Mono',monospace] text-xs leading-[14px]">992.10</dd>
    </dl>
    <label htmlFor="zoom" className="mr-0.5">Z:</label>
    <input id="zoom" defaultValue="95%" className="h-[21px] w-[45px] border border-[#b0b0b0] bg-white pl-2" />
    <Spinner name="zoom" />
    <svg width="12" height="12" viewBox="0 0 12 12" className="ml-1 mr-1 self-end" fill="#b0b0b0" aria-hidden="true">
      <path d="M8 0h2v2H8zM4 4h2v2H4zM8 4h2v2H8zM0 8h2v2H0zM4 8h2v2H4zM8 8h2v2H8z" />
    </svg>
  </footer>
);

const taskColors = ["#e0b050", "#e06020", "#e8e8e8", "#3a70a8", "#d8d8e0", "#d8e4f4", "#f4f8ff", "#5a1818", "#666666", "#333333"];

const Taskbar = () => (
  <div className="flex h-2 shrink-0 overflow-hidden border-t border-[#3a4250] bg-linear-to-r from-[#a8c0e0] from-88% to-[#8090a8] to-90%">
    <div className="w-[59px] shrink-0 bg-[#7f90aa] pl-3">
      <svg width="32" height="7" viewBox="0 0 32 7" aria-hidden="true"><path d="M2 7C7 1 25 1 30 7z" fill="#a9bdd8" stroke="#e0e8f4" /></svg>
    </div>
    {taskColors.map((color, i) => (
      <div key={i} className="flex w-[62px] shrink-0 justify-center rounded-t-sm border-x-2 border-t border-x-[#5c6c86] border-t-white bg-[#cddaee]">
        <svg width="24" height="7" viewBox="0 0 24 7" aria-hidden="true"><path d="M5 7C7 3 17 3 19 7z" fill={color} /></svg>
      </div>
    ))}
    <div className="ml-auto w-3.5 border-l border-[#3a4250] bg-[#7a8088]" />
  </div>
);

const App = () => (
  <div className="flex h-screen min-h-[700px] flex-col overflow-hidden bg-[#eef0ee] font-['Open_Sans','Noto_Sans',sans-serif] text-[11px] leading-4 text-black">
    <TitleBar />
    <nav aria-label="Menu bar" className={clsx(bar, "flex h-[21px] shrink-0 pl-px to-[#d9ddef]")}>
      {menus.map((name) => {
        const open = name === "_Object";
        return (
          <div key={name} className={clsx("relative", open && "mx-0.5")}>
            <button className={clsx("h-5 px-1.5", open ? "rounded-sm border border-[#a9c4e8] bg-[#e4ebf7]" : "border border-transparent")}>
              <Mnemonic text={name} />
            </button>
            {open && <ObjectMenu />}
          </div>
        );
      })}
    </nav>
    <div className={clsx(bar, "flex h-[30px] shrink-0 items-center via-[#d3daef] via-40% to-[#dfe2f3] pl-0.5")}>
      {commands.map((command, i) =>
        command ? <IconButton key={i} label={command[0]}>{command[1]}</IconButton> : <Divider key={i} />,
      )}
    </div>
    <ToolControls />
    <Workspace />
    <PaletteBar />
    <div className="flex h-4 shrink-0 items-center bg-[#ebece8] pr-4">
      <ScrollArrow label="Scroll palette left" rotate="" />
      <div className={clsx(hThumb, "ml-1 flex-481")}>
        <Grip />
      </div>
      <div className="flex-1388" />
      <ScrollArrow label="Scroll palette right" rotate="rotate-180" />
    </div>
    <StatusBar />
    <Taskbar />
  </div>
);

export default App;
